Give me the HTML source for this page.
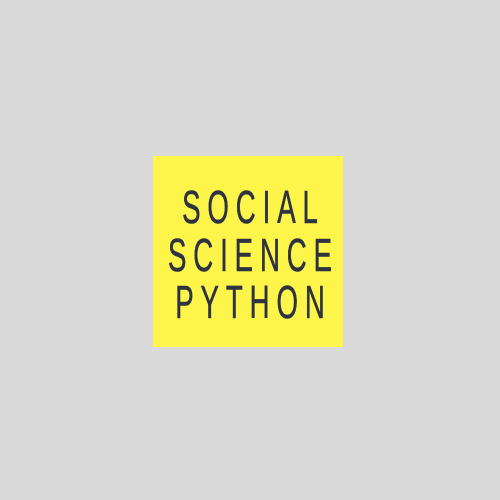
<!DOCTYPE html>
<html><head><style>
html,body{margin:0;padding:0;}
body{width:500px;height:500px;background:#dadada;position:relative;overflow:hidden;}
.sq{position:absolute;left:153px;top:156px;width:190px;height:191px;background:#fef54a;}
.l{position:absolute;left:0;width:500px;text-align:center;font-family:"Liberation Sans",sans-serif;font-weight:normal;font-size:46px;line-height:46px;color:#2e3340;letter-spacing:11.5px;text-indent:11.5px;transform:scaleX(0.6);transform-origin:250px 0;white-space:nowrap;-webkit-text-stroke:0.6px #2e3340;}
</style></head><body>
<div class="sq"></div>
<div class="l" style="top:184px">SOCIAL</div>
<div class="l" style="top:232px">SCIENCE</div>
<div class="l" style="top:279px">PYTHON</div>
</body></html>
